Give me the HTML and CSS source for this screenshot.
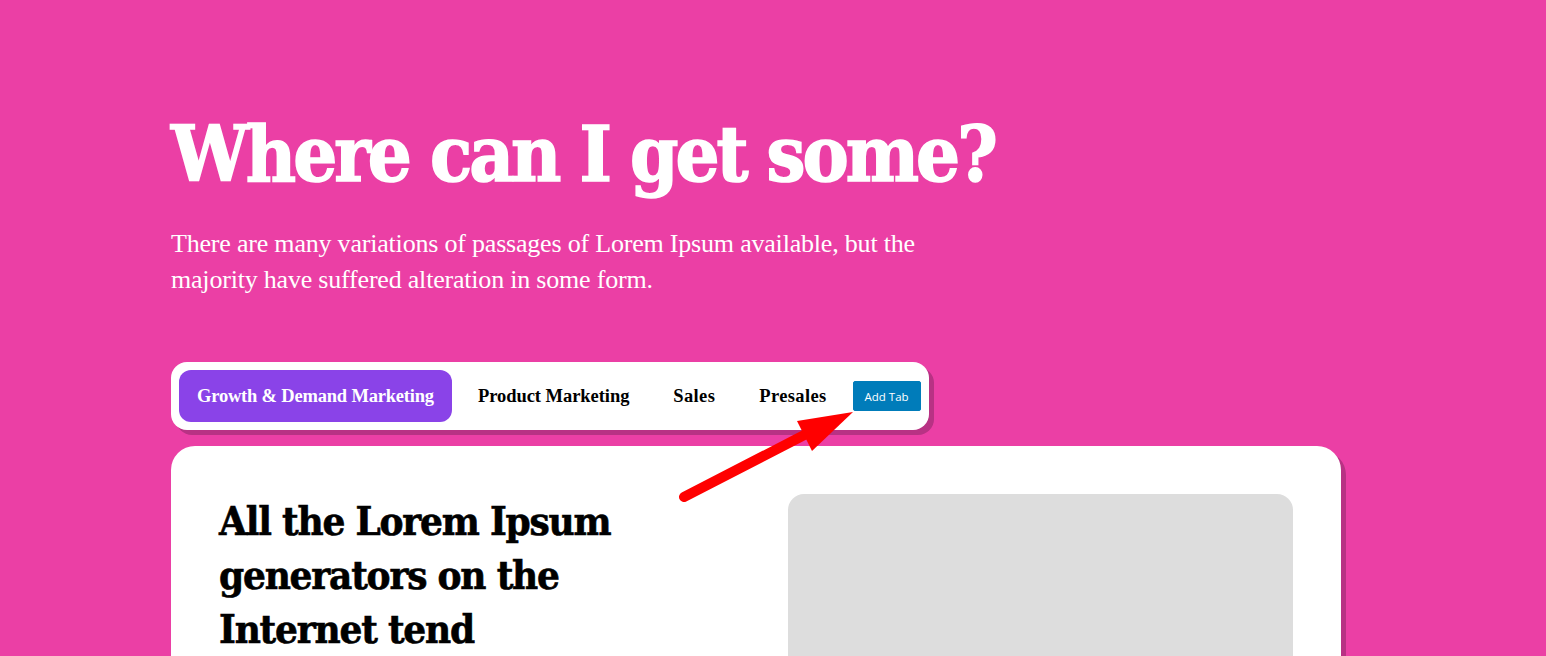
FILE: index.html
```html
<!DOCTYPE html>
<html lang="en">
<head>
    <meta charset="UTF-8">
    <meta name="viewport" content="width=device-width, initial-scale=1.0">
    <title>Where can I get some?</title>
    <link rel="stylesheet" href="styles.css">
</head>
<body>
    <section class="hero">
        <h1 class="hero-title">Where can I get some?</h1>
        <p class="hero-text">There are many variations of passages of Lorem Ipsum available, but the majority have suffered alteration in some form.</p>

        <div class="tabs">
            <a class="tab tab-active">Growth &amp; Demand Marketing</a>
            <a class="tab">Product Marketing</a>
            <a class="tab tab-wide">Sales</a>
            <a class="tab tab-wide">Presales</a>
            <button class="add-tab">Add Tab</button>
        </div>

        <div class="card">
            <h2 class="card-title">All the Lorem Ipsum generators on the Internet tend</h2>
            <div class="card-image"></div>
        </div>
    </section>

    <svg class="arrow" width="1546" height="656" viewBox="0 0 1546 656">
        <line x1="684" y1="497" x2="812" y2="431" stroke="#ff0000" stroke-width="10" stroke-linecap="round"/>
        <polygon points="797,421 853,412 812,451" fill="#ff0000"/>
    </svg>
</body>
</html>
```

FILE: styles.css
```css
html, body {
    height: 656px;
    overflow: hidden;
}
body {
    margin: 0;
    background-color: #eb3fa5;
    font-family: "DejaVu Serif", "Liberation Serif", serif;
    position: relative;
}
.hero {
    padding: 108px 205px 0 171px;
}
.hero-title {
    margin: 0;
    color: #fff;
    font-family: "DejaVu Serif Condensed", "DejaVu Serif", serif;
    font-size: 77px;
    font-weight: 700;
    line-height: 92px;
    letter-spacing: -3px;
    white-space: nowrap;
    -webkit-text-stroke: 1.5px #fff;
}
.hero-text {
    margin: 26px 0 0;
    width: 770px;
    color: #fff;
    font-family: "Liberation Serif", serif;
    font-size: 26px;
    line-height: 36px;
    letter-spacing: -0.2px;
}
.tabs {
    display: inline-flex;
    align-items: center;
    margin-top: 64px;
    padding: 8px;
    height: 52px;
    background-color: #fff;
    border-radius: 16px;
    box-shadow: 5px 5px 0 #b83284;
}
.tab {
    padding: 0 18px;
    height: 52px;
    line-height: 52px;
    margin-right: 8px;
    color: #000;
    font-family: "Liberation Serif", serif;
    font-size: 18.5px;
    font-weight: 700;
    letter-spacing: -0.05px;
    white-space: nowrap;
    border-radius: 12px;
}
.tab-active {
    background-color: #8a43e8;
    color: #fff;
    letter-spacing: -0.19px;
}
.tab-wide {
    letter-spacing: 0.36px;
}
.add-tab {
    width: 68px;
    height: 30px;
    padding: 0;
    border: 1px solid #007cba;
    border-radius: 2px;
    background-color: #007cba;
    color: #fff;
    font-family: "Open Sans", sans-serif;
    font-size: 11.5px;
}
.card {
    display: flex;
    justify-content: space-between;
    margin-top: 16px;
    padding: 48px;
    width: 1074px;
    height: 400px;
    background-color: #fff;
    border-radius: 24px;
    box-shadow: 5px 5px 0 #b83284;
}
.card-title {
    margin: 0;
    width: 410px;
    color: #000;
    font-family: "DejaVu Serif Condensed", "DejaVu Serif", serif;
    font-size: 40px;
    font-weight: 700;
    line-height: 54px;
    letter-spacing: -1.2px;
    -webkit-text-stroke: 0.6px #000;
}
.card-image {
    width: 505px;
    height: 400px;
    background-color: #ddd;
    border-radius: 16px;
}
.arrow {
    position: absolute;
    top: 0;
    left: 0;
    pointer-events: none;
}
```
